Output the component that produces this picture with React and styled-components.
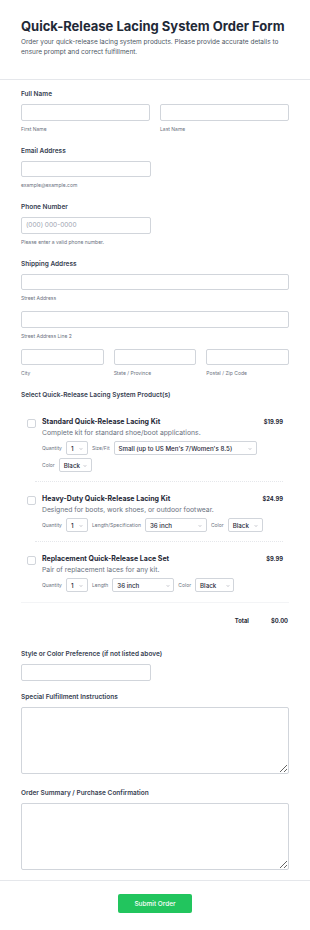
import React from 'react'
import styled, { createGlobalStyle } from 'styled-components'
import { ChevronDown } from 'lucide-react'

const Global = createGlobalStyle`
  * { box-sizing: border-box; }
  body {
    margin: 0;
    background: #fff;
    font-family: Inter, "Noto Sans", sans-serif;
    color: #1f2937;
  }
`

const Page = styled.div`
  width: 310px;
`

const Header = styled.header`
  padding: 17px 21px 22px;
  border-bottom: 1px solid #e5e7eb;
  h1 {
    margin: 0;
    font-size: 13px;
    font-weight: 700;
    color: #1f2937;
    line-height: 18px;
    white-space: nowrap;
  }
  p {
    margin: 2px 0 0;
    font-size: 6.5px;
    line-height: 10px;
    color: #4b5563;
  }
`

const Body = styled.div`
  padding: 9px 21px 10px;
`

const Field = styled.div`
  margin-bottom: ${p => p.$mb ?? 13}px;
`

const Label = styled.div`
  font-size: 6.5px;
  font-weight: 600;
  color: #374151;
  line-height: 10px;
  margin-bottom: 5px;
`

const Row = styled.div`
  display: grid;
  grid-template-columns: repeat(${p => p.$cols}, 1fr);
  gap: 10px;
`

const Input = styled.input`
  display: block;
  width: ${p => p.$w || '100%'};
  height: 16.5px;
  border: 1px solid #d1d5db;
  border-radius: 2px;
  font-size: 6.5px;
  padding: 0 4px;
  font-family: inherit;
  color: #374151;
  &::placeholder { color: #9ca3af; }
`

const Sub = styled.div`
  font-size: 5px;
  color: #6b7280;
  line-height: 8px;
  margin-top: 4px;
`

const Gap = styled.div`
  height: 9px;
`

const Area = styled.textarea`
  display: block;
  width: 100%;
  height: 67px;
  border: 1px solid #d1d5db;
  border-radius: 2px;
  font-family: inherit;
`

const Products = styled.div`
  padding: 0 6px 1px;
`

const Product = styled.div`
  display: flex;
  gap: 6px;
  padding: 12px 0 9px;
`

const Divider = styled.div`
  margin-left: 8px;
  border-top: 1px dotted #e5e7eb;
`

const Check = styled.span`
  flex: none;
  width: 9px;
  height: 9px;
  border: 1px solid #d1d5db;
  border-radius: 2px;
  margin-top: 1.5px;
`

const Info = styled.div`
  flex: 1;
`

const TitleRow = styled.div`
  display: flex;
  justify-content: space-between;
  align-items: center;
  font-size: 7px;
  font-weight: 700;
  color: #1f2937;
  line-height: 10px;
`

const Price = styled.span`
  font-size: 5.8px;
`

const Desc = styled.div`
  font-size: 6.8px;
  color: #6b7280;
  line-height: 9px;
  margin-top: 0.5px;
`

const Opts = styled.div`
  display: flex;
  flex-wrap: wrap;
  align-items: center;
  gap: 3px 4px;
  margin-top: 4.5px;
`

const OptGroup = styled.span`
  display: inline-flex;
  align-items: center;
  gap: 4px;
`

const OptLabel = styled.span`
  font-size: 5px;
  color: #6b7280;
`

const SelWrap = styled.span`
  position: relative;
  display: inline-flex;
  align-items: center;
  flex: none;
  width: ${p => p.$w}px;
  height: 14px;
  border: 1px solid #d1d5db;
  border-radius: 2px;
  padding: 0 0 0 4px;
  font-size: 6.2px;
  font-weight: 500;
  color: #1f2937;
  white-space: nowrap;
  overflow: hidden;
  svg {
    position: absolute;
    right: 3.5px;
    top: 4.5px;
    color: #6b7280;
  }
`

function Sel({ w, children }) {
  return (
    <SelWrap $w={w}>
      {children}
      <ChevronDown size={4} strokeWidth={2.5} />
    </SelWrap>
  )
}

const Opt = ({ label, w, value }) => (
  <OptGroup>
    <OptLabel>{label}</OptLabel>
    <Sel w={w}>{value}</Sel>
  </OptGroup>
)

const Total = styled.div`
  display: flex;
  justify-content: flex-end;
  gap: 22px;
  font-size: 5.8px;
  font-weight: 700;
  line-height: 8px;
  color: #1f2937;
  padding: 14px 1px 0 0;
  margin-bottom: 24px;
  border-top: 1px solid #f3f4f6;
`

const Footer = styled.div`
  border-top: 1px solid #e5e7eb;
  display: flex;
  justify-content: center;
  padding: 13px 0 17px;
`

const Button = styled.button`
  width: 74px;
  height: 19px;
  border: none;
  border-radius: 2px;
  background: #22c55e;
  color: #fff;
  font-family: inherit;
  font-size: 6.5px;
  font-weight: 500;
`

export default function App() {
  return (
    <Page>
      <Global />
      <Header>
        <h1>Quick-Release Lacing System Order Form</h1>
        <p>Order your quick-release lacing system products. Please provide accurate details to ensure prompt and correct fulfillment.</p>
      </Header>
      <Body>
        <Field>
          <Label>Full Name</Label>
          <Row $cols={2}>
            <div><Input /><Sub>First Name</Sub></div>
            <div><Input /><Sub>Last Name</Sub></div>
          </Row>
        </Field>
        <Field>
          <Label>Email Address</Label>
          <Input $w="129.5px" />
          <Sub>example@example.com</Sub>
        </Field>
        <Field>
          <Label>Phone Number</Label>
          <Input $w="129.5px" placeholder="(000) 000-0000" />
          <Sub>Please enter a valid phone number.</Sub>
        </Field>
        <Field>
          <Label>Shipping Address</Label>
          <Input />
          <Sub>Street Address</Sub>
          <Gap />
          <Input />
          <Sub>Street Address Line 2</Sub>
          <Gap />
          <Row $cols={3}>
            <div><Input /><Sub>City</Sub></div>
            <div><Input /><Sub>State / Province</Sub></div>
            <div><Input /><Sub>Postal / Zip Code</Sub></div>
          </Row>
        </Field>
        <Label>Select Quick-Release Lacing System Product(s)</Label>
        <Products>
          <Product>
            <Check />
            <Info>
              <TitleRow><span>Standard Quick-Release Lacing Kit</span><Price>$19.99</Price></TitleRow>
              <Desc>Complete kit for standard shoe/boot applications.</Desc>
              <Opts>
                <Opt label="Quantity" w={22} value="1" />
                <Opt label="Size/Fit" w={143} value="Small (up to US Men's 7/Women's 8.5)" />
                <Opt label="Color" w={33} value="Black" />
              </Opts>
            </Info>
          </Product>
          <Divider />
          <Product>
            <Check />
            <Info>
              <TitleRow><span>Heavy-Duty Quick-Release Lacing Kit</span><Price>$24.99</Price></TitleRow>
              <Desc>Designed for boots, work shoes, or outdoor footwear.</Desc>
              <Opts>
                <Opt label="Quantity" w={22} value="1" />
                <Opt label="Length/Specification" w={62} value="36 inch" />
                <Opt label="Color" w={35} value="Black" />
              </Opts>
            </Info>
          </Product>
          <Divider />
          <Product>
            <Check />
            <Info>
              <TitleRow><span>Replacement Quick-Release Lace Set</span><Price>$9.99</Price></TitleRow>
              <Desc>Pair of replacement laces for any kit.</Desc>
              <Opts>
                <Opt label="Quantity" w={22} value="1" />
                <Opt label="Length" w={62} value="36 inch" />
                <Opt label="Color" w={39} value="Black" />
              </Opts>
            </Info>
          </Product>
        </Products>
        <Total><span>Total</span><span>$0.00</span></Total>
        <Field $mb={11.5}>
          <Label>Style or Color Preference (if not listed above)</Label>
          <Input $w="129.5px" />
        </Field>
        <Field $mb={14}>
          <Label>Special Fulfillment Instructions</Label>
          <Area />
        </Field>
        <Field $mb={0}>
          <Label>Order Summary / Purchase Confirmation</Label>
          <Area />
        </Field>
      </Body>
      <Footer><Button>Submit Order</Button></Footer>
    </Page>
  )
}
